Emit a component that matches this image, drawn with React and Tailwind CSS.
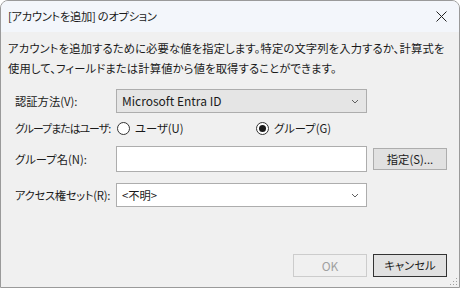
import React from 'react';

function Chevron() {
  return (
    <svg width="8" height="5" viewBox="0 0 8 5" className="text-[#606060]">
      <path d="M1 1 L4 4 L7 1" fill="none" stroke="currentColor" strokeWidth="1" />
    </svg>
  );
}

function Radio({ checked, label }) {
  return (
    <div className="flex items-center gap-[5px]">
      <span className="w-[13px] h-[13px] rounded-full border border-[#333] bg-white flex items-center justify-center">
        {checked && <span className="w-[7px] h-[7px] rounded-full bg-[#1a1a1a]" />}
      </span>
      <span>{label}</span>
    </div>
  );
}

export default function App() {
  return (
    <div className="w-[462px] h-[289px] bg-white text-[11.3px] text-[#1a1a1a] font-['Noto_Sans_CJK_JP','Noto_Sans',sans-serif] [font-feature-settings:'palt']">
      <div className="w-[460px] h-[288px] flex flex-col rounded-t-[8px] border border-[#9a9a9a] overflow-hidden bg-[#f0f0f0]">
        {/* Title bar */}
        <div className="h-[31px] shrink-0 bg-[#f3f6fb] flex items-center justify-between pl-[7px] pr-[12px]">
          <span className="whitespace-nowrap tracking-[-0.3px]">[アカウントを追加] のオプション</span>
          <svg width="11" height="11" viewBox="0 0 11 11">
            <path d="M0.5 0.5 L10.5 10.5 M10.5 0.5 L0.5 10.5" stroke="#222" strokeWidth="1" />
          </svg>
        </div>

        {/* Body */}
        <div className="flex-1 flex flex-col px-[7px] pt-[6px] relative">
          <p className="leading-[20px] whitespace-nowrap tracking-[0.15px]">
            アカウントを追加するために必要な値を指定します。特定の文字列を入力するか、計算式を
            <br />
            使用して、フィールドまたは計算値から値を取得することができます。
          </p>

          <div className="mt-[11px] pl-[7px] flex flex-col">
            <div className="flex items-center h-[24px]">
              <span className="w-[101px] shrink-0 whitespace-nowrap">認証方法(V):</span>
              <div className="w-[251px] h-[24px] border border-[#adadad] bg-[#e5e5e5] flex items-center justify-between pl-[5px] pr-[7px]">
                <span className="text-[12px]">Microsoft Entra ID</span>
                <Chevron />
              </div>
            </div>

            <div className="flex items-center h-[22px] mt-[4px]">
              <span className="w-[102px] shrink-0 whitespace-nowrap text-[10.8px] tracking-[-0.9px]">グループまたはユーザ:</span>
              <div className="w-[139px]">
                <Radio label="ユーザ(U)" />
              </div>
              <Radio checked label="グループ(G)" />
            </div>

            <div className="flex items-center h-[26px] mt-[7px]">
              <span className="w-[101px] shrink-0 whitespace-nowrap">グループ名(N):</span>
              <div className="w-[251px] h-[26px] border border-[#adadad] bg-white" />
              <button className="ml-[6px] w-[74px] h-[22px] border border-[#adadad] bg-[#e1e1e1]">
                指定(S)...
              </button>
            </div>

            <div className="flex items-center h-[24px] mt-[11px]">
              <span className="w-[101px] shrink-0 whitespace-nowrap tracking-[-0.3px]">アクセス権セット(R):</span>
              <div className="w-[251px] h-[24px] border border-[#adadad] bg-white flex items-center justify-between pl-[5px] pr-[7px]">
                <span>&lt;不明&gt;</span>
                <Chevron />
              </div>
            </div>
          </div>

          <div className="mt-auto mb-[10px] flex justify-end gap-[6px] pr-[5px]">
            <button className="w-[74px] h-[23px] border border-[#cccccc] bg-[#f0f0f0] text-[#a0a0a0] text-[12px]">OK</button>
            <button className="w-[74px] h-[23px] border border-[#333333] bg-[#e1e1e1]">キャンセル</button>
          </div>

          <svg width="10" height="10" viewBox="0 0 10 10" className="absolute right-[1px] bottom-[1px]">
            {[[8, 2], [8, 5], [5, 5], [8, 8], [5, 8], [2, 8]].map(([x, y], i) => (
              <rect key={i} x={x} y={y} width="1" height="1" fill="#a0a0a0" />
            ))}
          </svg>
        </div>
      </div>
    </div>
  );
}
